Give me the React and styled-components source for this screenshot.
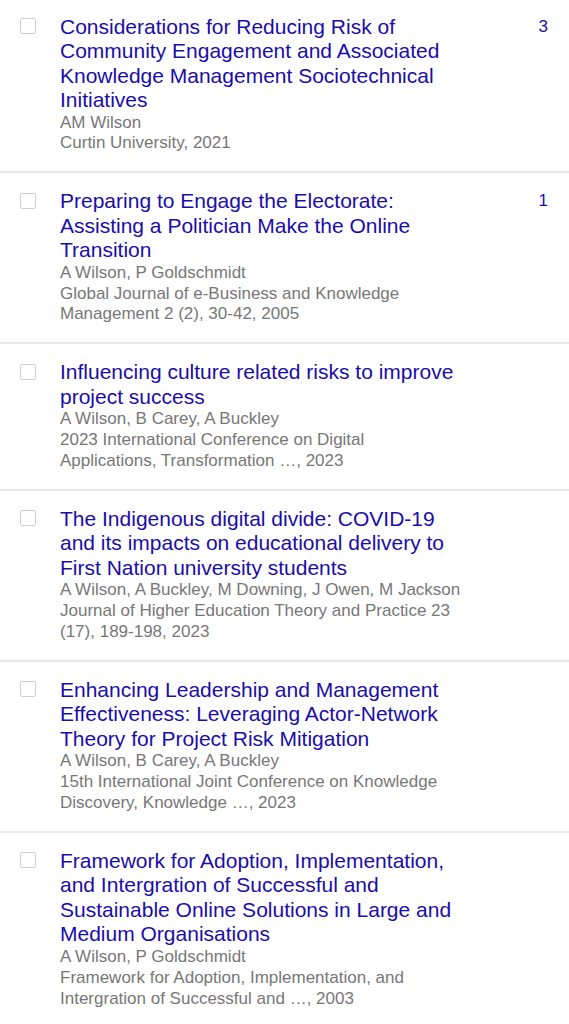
import React from "react";
import styled, { createGlobalStyle } from "styled-components";

const GlobalStyle = createGlobalStyle`
  html, body {
    margin: 0;
    padding: 0;
    background: #fff;
  }
  body {
    font-family: "Liberation Sans", Arial, sans-serif;
  }
`;

const List = styled.div`
  display: flex;
  flex-direction: column;
  width: 569px;
`;

const Row = styled.div`
  display: grid;
  grid-template-columns: 16px 402px 1fr;
  column-gap: 24px;
  padding: 16px 20px 17px 20px;
  border-bottom: 2px solid #e8e8e8;

  &:first-child {
    padding-top: 14.5px;
  }
`;

const Check = styled.span`
  display: block;
  width: 14px;
  height: 14px;
  margin-top: 3.5px;
  border: 1px solid #cfcfcf;
  border-radius: 2px;
  background: #fff;
`;

const Body = styled.div`
  display: flex;
  flex-direction: column;
`;

const Title = styled.a`
  color: #1a0dab;
  font-size: 21px;
  line-height: 24.5px;
  text-decoration: none;
`;

const Meta = styled.div`
  color: #777;
  font-size: 17px;
  line-height: 20.85px;
`;

const Cites = styled.a`
  justify-self: end;
  color: #1a0dab;
  font-size: 17px;
  line-height: 24.5px;
  text-decoration: none;
  padding-right: 1px;
`;

const items = [
  {
    title:
      "Considerations for Reducing Risk of Community Engagement and Associated Knowledge Management Sociotechnical Initiatives",
    authors: "AM Wilson",
    source: "Curtin University, 2021",
    cites: "3",
  },
  {
    title:
      "Preparing to Engage the Electorate: Assisting a Politician Make the Online Transition",
    authors: "A Wilson, P Goldschmidt",
    source: "Global Journal of e-Business and Knowledge Management 2 (2), 30-42, 2005",
    cites: "1",
  },
  {
    title: "Influencing culture related risks to improve project success",
    authors: "A Wilson, B Carey, A Buckley",
    source:
      "2023 International Conference on Digital Applications, Transformation …, 2023",
  },
  {
    title:
      "The Indigenous digital divide: COVID-19 and its impacts on educational delivery to First Nation university students",
    authors: "A Wilson, A Buckley, M Downing, J Owen, M Jackson",
    source: "Journal of Higher Education Theory and Practice 23 (17), 189-198, 2023",
  },
  {
    title:
      "Enhancing Leadership and Management Effectiveness: Leveraging Actor-Network Theory for Project Risk Mitigation",
    authors: "A Wilson, B Carey, A Buckley",
    source: "15th International Joint Conference on Knowledge Discovery, Knowledge …, 2023",
  },
  {
    title:
      "Framework for Adoption, Implementation, and Intergration of Successful and Sustainable Online Solutions in Large and Medium Organisations",
    authors: "A Wilson, P Goldschmidt",
    source: "Framework for Adoption, Implementation, and Intergration of Successful and …, 2003",
  },
];

export default function App() {
  return (
    <>
      <GlobalStyle />
      <List>
        {items.map((it, i) => (
          <Row key={i}>
            <Check />
            <Body>
              <Title href="#">{it.title}</Title>
              <Meta>{it.authors}</Meta>
              <Meta>{it.source}</Meta>
            </Body>
            {it.cites ? <Cites href="#">{it.cites}</Cites> : <span />}
          </Row>
        ))}
      </List>
    </>
  );
}
